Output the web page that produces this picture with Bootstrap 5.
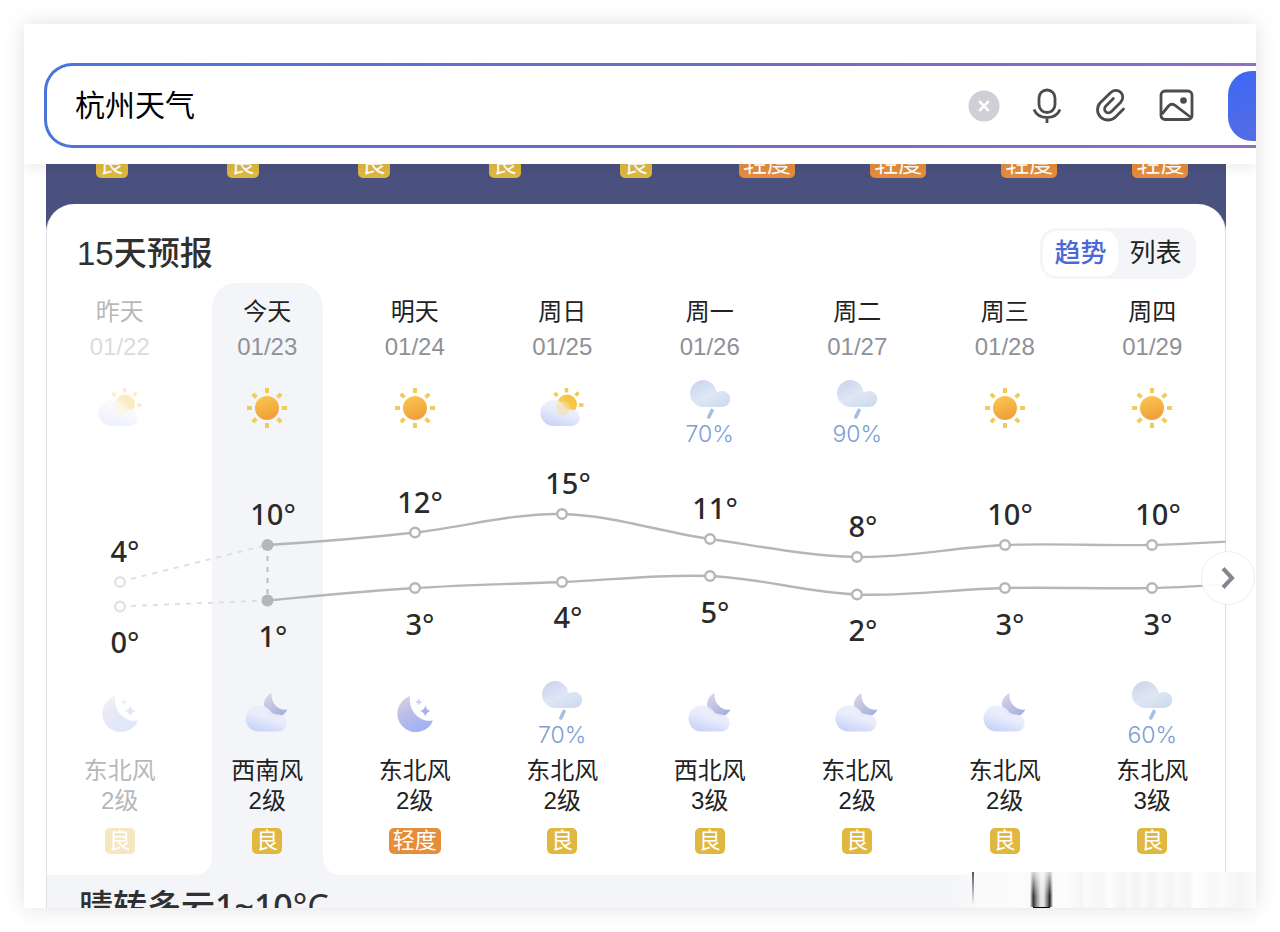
<!DOCTYPE html>
<html lang="zh-CN">
<head>
<meta charset="utf-8">
<meta name="viewport" content="width=device-width, initial-scale=1">
<title>杭州天气</title>
<link href="https://cdn.jsdelivr.net/npm/bootstrap@5.3.0/dist/css/bootstrap.min.css" rel="stylesheet">
<style>
  body { font-family: "Liberation Sans", "Noto Sans CJK SC", sans-serif; color: #222; background: #fff; }
  .page-frame { padding: 24px; height: 100vh; }
  .screen { box-shadow: 0 0 22px rgba(0,0,0,.12); background: #fff; }

  .top-bar { z-index: 3; padding: 39px 0 16px 20px; box-shadow: 0 4px 12px rgba(0,0,0,.07); }
  .search-box {
    height: 85px; margin-right: -80px; padding: 0 4px 0 28px;
    border: 3px solid transparent; border-radius: 28px;
    background: linear-gradient(#fff, #fff) padding-box,
                linear-gradient(100deg, #4a74dc, #6a6cc6 50%, #936fc6) border-box;
  }
  .search-input { font-size: 30px; line-height: 40px; color: #000; outline: 0; min-width: 0; }
  .tool-btn { width: 36px; height: 36px; }
  .tool-btn svg, .next-btn svg { display: block; }
  .send-btn { width: 101px; height: 70px; margin-left: 34px; border-radius: 24px; background: linear-gradient(160deg, #3c68f5, #5f6ddf); }

  .weather { margin: 0 30px 0 22px; }
  .hourly { background: #4b517e; padding-bottom: 38px; line-height: 28px; }
  .hourly .aqi { font-size: 24px; line-height: 28px; margin-top: -14px; }
  .aqi { display: inline-block; vertical-align: top; padding: 0 4px; border-radius: 5px; color: #fff; background: #e0b840; font-size: 22px; line-height: 26px; }
  .aqi-mild { background: #e58d3b; }

  .panel { margin-top: -26px; border-radius: 28px 28px 0 0; border: 1px solid #dedfe3; border-width: 0 1px; background: #fff; }
  .panel-head { padding: 24px 29px 4px 30px; }
  .panel-title { font-size: 33px; line-height: 50px; font-weight: 500; color: #303030; }
  .switcher { background: #f4f5f9; border-radius: 17px; padding: 3px; }
  .switcher button { width: 75px; height: 45px; font-size: 26px; line-height: 45px; border-radius: 14px; color: #222; }
  .switcher .is-on { background: #fff; color: #4c68d7; font-weight: 500; }

  .forecast { display: grid; grid-template-columns: repeat(8, 1fr); margin: 0 -1px; }
  .today-col { grid-area: 1 / 2 / 4 / 3; width: 75%; background: #f4f5f9; border-radius: 24px 24px 0 0; }
  .today-col::before, .today-col::after { content: ""; position: absolute; bottom: 0; width: 16px; height: 16px; }
  .today-col::before { right: 100%; background: radial-gradient(circle at 0 0, transparent 15px, #f4f5f9 16px); }
  .today-col::after { left: 100%; background: radial-gradient(circle at 100% 0, transparent 15px, #f4f5f9 16px); }
  .chart { grid-area: 2 / 1 / 3 / 9; }
  .day { grid-row: 1; padding-top: 11px; font-size: 24px; line-height: 36px; }
  .night { grid-row: 3; padding: 11px 0 21px; font-size: 24px; line-height: 30px; }
  .date { color: #8f9197; line-height: 34px; }
  .sky { height: 96px; padding-top: 16px; }
  .night .sky { height: 75px; padding-top: 0; }
  .chance { font-family: Inter, "Liberation Sans", sans-serif; font-weight: 300; font-size: 23px; line-height: 28px; color: #7c9ed2; }
  .night .aqi { margin-top: 12px; }
  .past { opacity: .32; }
  .c1 { grid-column: 1; } .c2 { grid-column: 2; } .c3 { grid-column: 3; } .c4 { grid-column: 4; }
  .c5 { grid-column: 5; } .c6 { grid-column: 6; } .c7 { grid-column: 7; } .c8 { grid-column: 8; }

  .temps { font: 500 29px "Noto Sans", sans-serif; fill: #2a2a2a; text-anchor: middle; }
  .temps tspan { font-weight: 400; }
  .next-btn { width: 54px; height: 54px; right: -29px; top: 91px; border: 1px solid #eeeef1; background: rgba(255,255,255,.93); z-index: 2; }

  .summary { background: #f4f5f9; border: 1px solid #dedfe3; border-width: 0 1px; padding: 8px 32px; }
  .summary p { font: 500 34px/46px "Noto Sans", "Noto Sans CJK SC", sans-serif; color: #303030; }
  .summary span { font-weight: 400; }
  .streaks {
    right: 0; bottom: 0; width: 306px; height: 36px; z-index: 2;
    background:
      linear-gradient(#000, #000) 83px 100% / 17px 1px no-repeat,
      linear-gradient(rgba(250,250,250,.8), rgba(250,250,250,0) 70%) 79px 0 / 25px 34px no-repeat,
      linear-gradient(90deg, transparent, #333 14%, #999 30%, #e4e4e4 46%, #e4e4e4 60%, #777 76%, #222 86%, transparent) 80px 0 / 23px 35px no-repeat,
      linear-gradient(#555, #f4f4f6) 22px 0 / 2px 32px no-repeat,
      linear-gradient(90deg, rgba(250,250,251,0), #fafafb 10%, #fcfcfc 38%, #f6f6f6 43%, #fbfbfb 44%, #f6f6f6 50%, #fdfdfd 52%, #f4f4f4 57%, #fafafa 58%, #f3f3f3 61%, #fafafa 63%, #f3f3f3 66%, #fbfbfb 69%, #f4f4f4 72%, #fafafa 74%, #f5f5f5 78%, #fff 80%, #f7f7f7 86%, #fbfbfb 89%, #f5f5f5 94%, #fbfbfb);
  }
</style>
</head>
<body>

<svg class="position-absolute" width="0" height="0" aria-hidden="true">
  <defs>
    <linearGradient id="gSun" x1="0" y1="0" x2="0.3" y2="1"><stop offset="0" stop-color="#fbc94f"/><stop offset="1" stop-color="#f0a03c"/></linearGradient>
    <linearGradient id="gSun2" x1="1" y1="0" x2="0" y2="1"><stop offset="0" stop-color="#f5bd2c"/><stop offset="1" stop-color="#f7d878"/></linearGradient>
    <linearGradient id="gCloud" x1="0.7" y1="0" x2="0.2" y2="1"><stop offset="0" stop-color="#eceefa" stop-opacity=".85"/><stop offset=".45" stop-color="#e8ecfb"/><stop offset="1" stop-color="#c6d0f8"/></linearGradient>
    <linearGradient id="gRain" x1="0" y1="0" x2="0.7" y2="1"><stop offset="0" stop-color="#c8d3ec"/><stop offset=".6" stop-color="#dfe6f4"/><stop offset="1" stop-color="#cfdcf0"/></linearGradient>
    <linearGradient id="gMoon" x1="0" y1="0" x2="0.5" y2="1"><stop offset="0" stop-color="#dcd4e4"/><stop offset=".5" stop-color="#b9bde8"/><stop offset="1" stop-color="#a2b2f4"/></linearGradient>
    <linearGradient id="gMoon2" x1="0" y1="0" x2="0.8" y2="1"><stop offset="0" stop-color="#dcd8e8"/><stop offset="1" stop-color="#a3aedd"/></linearGradient>
    <symbol id="sunny" viewBox="0 0 48 56">
      <circle cx="24" cy="28" r="12" fill="url(#gSun)"/>
      <g stroke="#f0cc5c" stroke-width="4"><path d="M24 8v5M24 43v5M4 28h5M39 28h5M9.800 13.800l3.600 3.600M34.600 38.600l3.600 3.600M9.800 42.200l3.600-3.600M34.600 17.400l3.600-3.600"/></g>
    </symbol>
    <symbol id="partly" viewBox="0 0 48 56">
      <circle cx="29" cy="24.500" r="10" fill="url(#gSun2)"/>
      <g stroke="#efcb55" stroke-width="3.500"><path d="M28.500 8v4.500M16.500 13l3 3M40.500 12.500l-3 3M41 25h4.500"/></g>
      <path d="M15.500 20c6 0 10 3 12 8 2 2 4 1.500 7 1.500a8.300 8.300 0 0 1 0 16.500h-19a13 13 0 0 1 0-26z" fill="url(#gCloud)"/>
      <circle cx="25" cy="28" r="7" fill="#f8dfa0" opacity=".55"/>
    </symbol>
    <symbol id="cloudnight" viewBox="0 0 48 56">
      <path d="M28.500 12C20 17 18.500 25 25 33c6 5.500 15.500 3.500 19.500-4.500C36 30 27.500 23 28.500 12z" fill="url(#gMoon2)"/>
      <path d="M15.500 24.500c6 0 10 2.500 13 7 2 1.500 4 1.500 7 2a8.500 8.500 0 0 1-.5 17h-19.500a13 13 0 0 1 0-26z" fill="url(#gCloud)"/>
    </symbol>
    <symbol id="moon" viewBox="0 0 48 56">
      <path d="M19 15A18.500 18.500 0 1 0 42 39.500C29 42 17 30 19 15z" fill="url(#gMoon)"/>
      <path d="M34.300 24.500q1 4.500 5.200 5.500-4.200 1-5.200 5.500-1-4.500-5.200-5.500 4.200-1 5.200-5.500z" fill="#a9b0e6"/>
      <path d="M27.700 17.500q.7 2.800 3.500 3.500-2.800.7-3.500 3.500-.7-2.800-3.500-3.500 2.800-.7 3.500-3.500z" fill="#cfd2ee"/>
    </symbol>
    <symbol id="rain" viewBox="0 0 48 40">
      <path d="M17.500 0c6 0 11.500 5 12.800 11 .4 1.500 2 1 4.200.2a8 8 0 1 1 2 15.800h-19A13.500 13.500 0 0 1 17.500 0z" fill="url(#gRain)"/>
      <path d="M26 30.500l-3.200 6.500" stroke="#a3bfe3" stroke-width="3.600" stroke-linecap="round"/>
    </symbol>
  </defs>
</svg>

<div class="page-frame">
<main class="screen position-relative overflow-hidden h-100">

  <header class="top-bar position-relative bg-white">
    <form class="search-box d-flex align-items-center" role="search">
      <input class="search-input border-0 bg-transparent p-0 flex-grow-1" type="text" value="杭州天气" aria-label="搜索">
      <div class="d-flex" style="gap:28px">
        <button type="reset" class="tool-btn btn border-0 p-0" aria-label="清除">
          <svg width="36" height="36" viewBox="0 0 36 36"><circle cx="18" cy="18" r="15.500" fill="#cfcfd5"/><path d="M13.200 13.200l9.600 9.600m0-9.600l-9.600 9.600" stroke="#fff" stroke-width="2.600"/></svg>
        </button>
        <button type="button" class="tool-btn btn border-0 p-0" aria-label="语音">
          <svg width="36" height="36" viewBox="0 0 36 36" fill="none" stroke="#4c4c4f" stroke-width="2.800"><rect x="9" y="2" width="16" height="22.500" rx="8"/><path d="M4 21.500c2 5 7 8 13 8s11-3 13-8M17 29.500V35"/></svg>
        </button>
        <button type="button" class="tool-btn btn border-0 p-0" aria-label="附件">
          <svg width="36" height="36" viewBox="0 0 36 36" fill="none" stroke="#4c4c4f" stroke-width="2.800" stroke-linecap="round" stroke-linejoin="round"><path d="M29.500 21l-8 8c-4 4-11 4-15 0s-4-10.500 0-14.500L16.500 4.700c3-3 7.500-3 10.200-.4s2.700 7 0 10L17.500 23.500c-1.700 1.700-4.300 1.700-5.800.2s-1.500-4 .2-5.700l7.500-7.500"/></svg>
        </button>
        <button type="button" class="tool-btn btn border-0 p-0" aria-label="图片">
          <svg width="36" height="36" viewBox="0 0 36 36" fill="none" stroke="#4c4c4f" stroke-width="2.800" stroke-linejoin="round"><rect x="3" y="3" width="31" height="28.500" rx="4"/><path d="M4 26l6.500-8c2-2.200 4-2.400 6.300-.8L33 29.500"/><circle cx="25.500" cy="12.500" r="3.300" fill="#4c4c4f" stroke="none"/></svg>
        </button>
      </div>
      <button type="submit" class="send-btn btn border-0 flex-shrink-0" aria-label="发送"></button>
    </form>
  </header>

  <section class="weather">
    <div class="hourly d-flex text-center">
      <div class="flex-fill w-100"><span class="aqi">良</span></div>
      <div class="flex-fill w-100"><span class="aqi">良</span></div>
      <div class="flex-fill w-100"><span class="aqi">良</span></div>
      <div class="flex-fill w-100"><span class="aqi">良</span></div>
      <div class="flex-fill w-100"><span class="aqi">良</span></div>
      <div class="flex-fill w-100"><span class="aqi aqi-mild">轻度</span></div>
      <div class="flex-fill w-100"><span class="aqi aqi-mild">轻度</span></div>
      <div class="flex-fill w-100"><span class="aqi aqi-mild">轻度</span></div>
      <div class="flex-fill w-100"><span class="aqi aqi-mild">轻度</span></div>
    </div>

    <div class="panel">
      <div class="panel-head d-flex justify-content-between align-items-center">
        <h2 class="panel-title m-0">15天预报</h2>
        <div class="switcher d-flex">
          <button type="button" class="is-on border-0 p-0">趋势</button>
          <button type="button" class="border-0 p-0 bg-transparent">列表</button>
        </div>
      </div>

      <div class="forecast text-center">
        <div class="today-col position-relative mx-auto"></div>

        <div class="day c1 past"><div>昨天</div><div class="date">01/22</div><div class="sky"><svg class="d-block mx-auto" width="48" height="56"><use href="#partly"/></svg></div></div>
        <div class="day c2 position-relative"><div>今天</div><div class="date">01/23</div><div class="sky"><svg class="d-block mx-auto" width="48" height="56"><use href="#sunny"/></svg></div></div>
        <div class="day c3"><div>明天</div><div class="date">01/24</div><div class="sky"><svg class="d-block mx-auto" width="48" height="56"><use href="#sunny"/></svg></div></div>
        <div class="day c4"><div>周日</div><div class="date">01/25</div><div class="sky"><svg class="d-block mx-auto" width="48" height="56"><use href="#partly"/></svg></div></div>
        <div class="day c5"><div>周一</div><div class="date">01/26</div><div class="sky"><svg class="d-block mx-auto" width="48" height="40"><use href="#rain"/></svg><div class="chance">70%</div></div></div>
        <div class="day c6"><div>周二</div><div class="date">01/27</div><div class="sky"><svg class="d-block mx-auto" width="48" height="40"><use href="#rain"/></svg><div class="chance">90%</div></div></div>
        <div class="day c7"><div>周三</div><div class="date">01/28</div><div class="sky"><svg class="d-block mx-auto" width="48" height="56"><use href="#sunny"/></svg></div></div>
        <div class="day c8"><div>周四</div><div class="date">01/29</div><div class="sky"><svg class="d-block mx-auto" width="48" height="56"><use href="#sunny"/></svg></div></div>

        <div class="chart position-relative">
          <svg class="d-block w-100" viewBox="0 0 1180 210" role="img" aria-label="气温趋势">
            <g fill="none" stroke="#b4b6ba" stroke-width="2.400">
              <path d="M221 85C270 82 320 78 369 72.500C418 67 467 53 516 54C565 55 615 72 664 79C713 86 762 96 811 97C860 98 910 87 959 85C1008 83 1057 86 1106 85C1155 84 1205 79 1254 79"/>
              <path d="M221 140.500C270 136 320 131 369 128C418 125 467 124 516 122C565 120 615 114 664 116C713 118 762 132.500 811 134.500C860 136.500 910 129 959 128C1008 127 1057 129 1106 128C1155 127 1205 122 1254 122"/>
              <g stroke-width="2" stroke-dasharray="5 6"><path stroke="#dfdfe1" d="M85 119L221 85M85 146L221 140.500"/><path stroke="#b9bbbf" d="M221.500 96v40"/></g>
              <g fill="#fff">
                <circle cx="369" cy="72.500" r="4.800"/><circle cx="516" cy="54" r="4.800"/><circle cx="664" cy="79" r="4.800"/><circle cx="811" cy="97" r="4.800"/><circle cx="959" cy="85" r="4.800"/><circle cx="1106" cy="85" r="4.800"/>
                <circle cx="369" cy="128" r="4.800"/><circle cx="516" cy="122" r="4.800"/><circle cx="664" cy="116" r="4.800"/><circle cx="811" cy="134.500" r="4.800"/><circle cx="959" cy="128" r="4.800"/><circle cx="1106" cy="128" r="4.800"/>
                <g stroke="#e2e2e4"><circle cx="74" cy="122" r="4.800"/><circle cx="74" cy="146.500" r="4.800"/></g>
              </g>
            </g>
            <g fill="#b4b6ba"><circle cx="221.500" cy="85" r="6"/><circle cx="221.500" cy="140.500" r="6"/></g>
            <g class="temps">
              <text x="79" y="102">4<tspan>°</tspan></text><text x="227" y="65">10<tspan>°</tspan></text><text x="374" y="53">12<tspan>°</tspan></text><text x="522" y="34">15<tspan>°</tspan></text><text x="669" y="59">11<tspan>°</tspan></text><text x="817" y="77">8<tspan>°</tspan></text><text x="964" y="65">10<tspan>°</tspan></text><text x="1112" y="65">10<tspan>°</tspan></text>
              <text x="79" y="193">0<tspan>°</tspan></text><text x="227" y="187">1<tspan>°</tspan></text><text x="374" y="175">3<tspan>°</tspan></text><text x="522" y="168">4<tspan>°</tspan></text><text x="669" y="163">5<tspan>°</tspan></text><text x="817" y="181">2<tspan>°</tspan></text><text x="964" y="175">3<tspan>°</tspan></text><text x="1112" y="175">3<tspan>°</tspan></text>
            </g>
          </svg>
          <button type="button" class="next-btn position-absolute rounded-circle p-0 d-flex align-items-center justify-content-center" aria-label="后几天">
            <svg width="22" height="24" viewBox="0 0 22 24" fill="none" stroke="#85868f" stroke-width="4"><path d="M6 2.500l9 9.500-9 9.500"/></svg>
          </button>
        </div>

        <div class="night c1 past"><div class="sky"><svg class="d-block mx-auto" width="48" height="56"><use href="#moon"/></svg></div><div>东北风</div><div>2级</div><span class="aqi">良</span></div>
        <div class="night c2 position-relative"><div class="sky"><svg class="d-block mx-auto" width="48" height="56"><use href="#cloudnight"/></svg></div><div>西南风</div><div>2级</div><span class="aqi">良</span></div>
        <div class="night c3"><div class="sky"><svg class="d-block mx-auto" width="48" height="56"><use href="#moon"/></svg></div><div>东北风</div><div>2级</div><span class="aqi aqi-mild">轻度</span></div>
        <div class="night c4"><div class="sky"><svg class="d-block mx-auto" width="48" height="40"><use href="#rain"/></svg><div class="chance">70%</div></div><div>东北风</div><div>2级</div><span class="aqi">良</span></div>
        <div class="night c5"><div class="sky"><svg class="d-block mx-auto" width="48" height="56"><use href="#cloudnight"/></svg></div><div>西北风</div><div>3级</div><span class="aqi">良</span></div>
        <div class="night c6"><div class="sky"><svg class="d-block mx-auto" width="48" height="56"><use href="#cloudnight"/></svg></div><div>东北风</div><div>2级</div><span class="aqi">良</span></div>
        <div class="night c7"><div class="sky"><svg class="d-block mx-auto" width="48" height="56"><use href="#cloudnight"/></svg></div><div>东北风</div><div>2级</div><span class="aqi">良</span></div>
        <div class="night c8"><div class="sky"><svg class="d-block mx-auto" width="48" height="40"><use href="#rain"/></svg><div class="chance">60%</div></div><div>东北风</div><div>3级</div><span class="aqi">良</span></div>
      </div>
    </div>

    <div class="summary"><p class="m-0">晴转多云1~10<span>°C</span></p></div>
  </section>

  <div class="streaks position-absolute" aria-hidden="true"></div>
</main>
</div>

<script src="https://cdn.jsdelivr.net/npm/bootstrap@5.3.0/dist/js/bootstrap.bundle.min.js"></script>
</body>
</html>
